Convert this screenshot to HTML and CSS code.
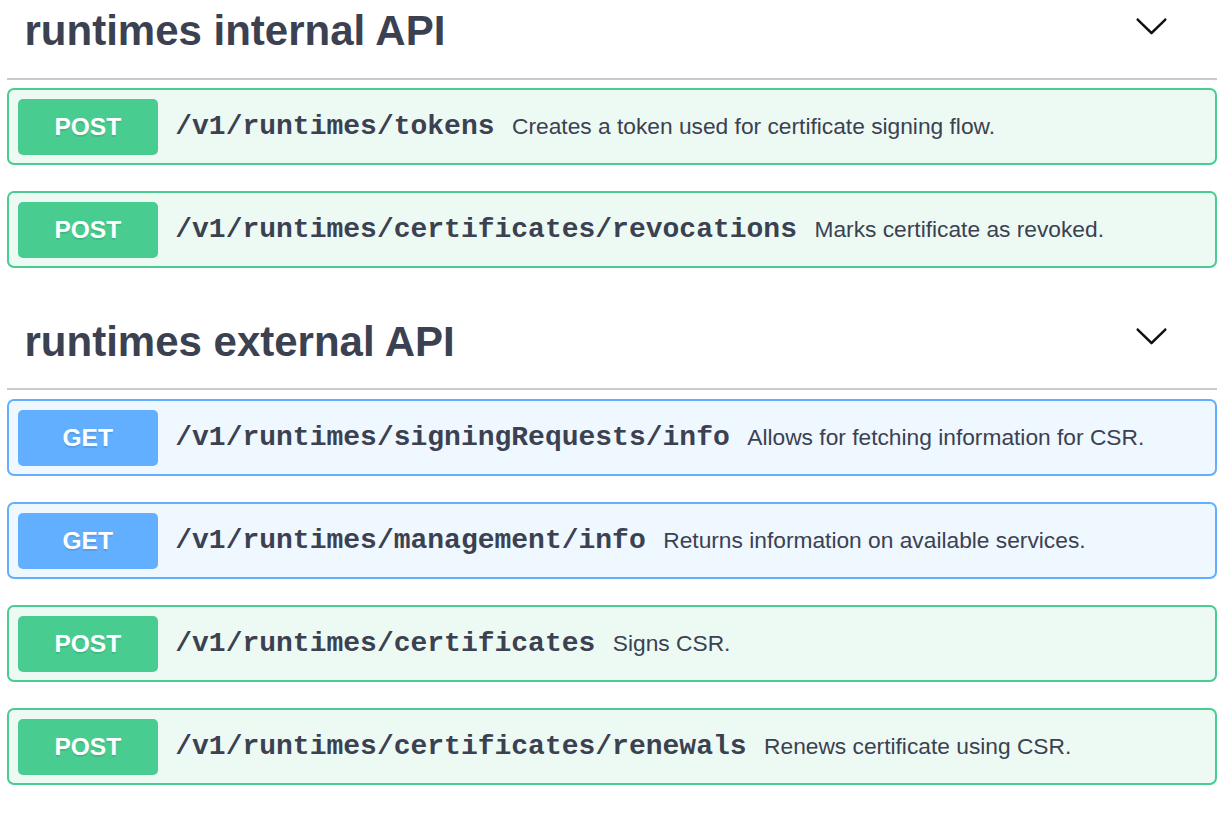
FILE: index.html
```html
<!DOCTYPE html>
<html>
<head>
<meta charset="utf-8">
<link rel="stylesheet" href="styles.css">
</head>
<body>
<div class="page">
  <section class="tag-section">
    <div class="tag">
      <span class="tag-title">runtimes internal API</span>
      <svg class="arrow" viewBox="0 0 20 20" width="35" height="35"><path d="M17.418 6.109c.272-.268.709-.268.979 0s.271.701 0 .969l-7.908 7.83c-.27.268-.707.268-.979 0l-7.908-7.83c-.27-.268-.27-.701 0-.969.271-.268.709-.268.979 0L10 13.25l7.418-7.141z"/></svg>
    </div>
    <div class="opblock post">
      <span class="method">POST</span>
      <span class="path">/v1/runtimes/tokens</span>
      <span class="desc">Creates a token used for certificate signing flow.</span>
    </div>
    <div class="opblock post">
      <span class="method">POST</span>
      <span class="path">/v1/runtimes/certificates/revocations</span>
      <span class="desc">Marks certificate as revoked.</span>
    </div>
  </section>
  <section class="tag-section">
    <div class="tag">
      <span class="tag-title">runtimes external API</span>
      <svg class="arrow" viewBox="0 0 20 20" width="35" height="35"><path d="M17.418 6.109c.272-.268.709-.268.979 0s.271.701 0 .969l-7.908 7.83c-.27.268-.707.268-.979 0l-7.908-7.83c-.27-.268-.27-.701 0-.969.271-.268.709-.268.979 0L10 13.25l7.418-7.141z"/></svg>
    </div>
    <div class="opblock get">
      <span class="method">GET</span>
      <span class="path">/v1/runtimes/signingRequests/info</span>
      <span class="desc">Allows for fetching information for CSR.</span>
    </div>
    <div class="opblock get">
      <span class="method">GET</span>
      <span class="path">/v1/runtimes/management/info</span>
      <span class="desc">Returns information on available services.</span>
    </div>
    <div class="opblock post">
      <span class="method">POST</span>
      <span class="path">/v1/runtimes/certificates</span>
      <span class="desc">Signs CSR.</span>
    </div>
    <div class="opblock post">
      <span class="method">POST</span>
      <span class="path">/v1/runtimes/certificates/renewals</span>
      <span class="desc">Renews certificate using CSR.</span>
    </div>
  </section>
</div>
</body>
</html>
```

FILE: styles.css
```css
html, body {
  margin: 0;
  padding: 0;
  background: #ffffff;
  overflow: hidden;
}

.page {
  margin-top: -16.5px;
  padding: 0 15px 0 7px;
  font-family: "Liberation Sans", Arial, sans-serif;
  color: #3b4151;
}

.tag-section {
  display: flex;
  flex-direction: column;
}

.tag {
  display: flex;
  align-items: flex-start;
  justify-content: space-between;
  padding: 17.5px 47.6px 17.5px 17.5px;
  margin: 0 0 8.75px;
  border-bottom: 2px solid #c8cacf;
}

.tag-title {
  font-size: 42px;
  line-height: 59px;
  font-weight: 700;
  color: #3b4151;
}

.arrow {
  display: block;
  margin-top: 6.5px;
  fill: #111111;
}

.opblock {
  display: flex;
  align-items: center;
  padding: 8.5px 8.75px;
  margin: 0 0 26px;
  border: 2px solid;
  border-radius: 7px;
}

.opblock.post {
  background: #edfaf4;
  border-color: #49cc90;
}

.opblock.get {
  background: #eff7ff;
  border-color: #61affe;
}

.method {
  display: block;
  min-width: 140px;
  height: 56px;
  line-height: 56px;
  text-align: center;
  border-radius: 5px;
  color: #ffffff;
  font-size: 24.5px;
  font-weight: 700;
  text-shadow: 0 1.75px 0 rgba(0, 0, 0, 0.1);
}

.post .method {
  background: #49cc90;
}

.get .method {
  background: #61affe;
}

.path {
  padding: 0 17.5px;
  font-family: "Liberation Mono", "Courier New", monospace;
  font-size: 28px;
  font-weight: 700;
  color: #3b4151;
}

.desc {
  font-size: 22.75px;
  color: #3b4151;
}
```
